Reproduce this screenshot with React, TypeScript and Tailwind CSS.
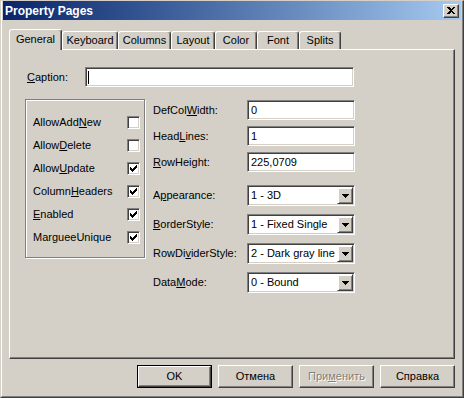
import React from 'react';

const raised =
  'border border-t-white border-l-white border-r-[#404040] border-b-[#404040] shadow-[inset_-1px_-1px_0_#808080]';
const sunken =
  'border border-t-[#808080] border-l-[#808080] border-r-white border-b-white shadow-[inset_1px_1px_0_#404040,inset_-1px_-1px_0_#D4D0C8]';

const tabs = [
  { name: 'General', w: 'w-[53px]' },
  { name: 'Keyboard', w: 'w-[56px]' },
  { name: 'Columns', w: 'w-[53px]' },
  { name: 'Layout', w: 'w-[44px]' },
  { name: 'Color', w: 'w-[42px]' },
  { name: 'Font', w: 'w-[42px]' },
  { name: 'Splits', w: 'w-[42px]' },
];

const CheckMark = () => (
  <svg width="7" height="7" viewBox="0 0 7 7" shapeRendering="crispEdges">
    <rect x="0" y="2" width="1" height="3" fill="#000" />
    <rect x="1" y="3" width="1" height="3" fill="#000" />
    <rect x="2" y="4" width="1" height="3" fill="#000" />
    <rect x="3" y="3" width="1" height="3" fill="#000" />
    <rect x="4" y="2" width="1" height="3" fill="#000" />
    <rect x="5" y="1" width="1" height="3" fill="#000" />
    <rect x="6" y="0" width="1" height="3" fill="#000" />
  </svg>
);

const CheckRow = ({ label, checked }: { label: React.ReactNode; checked: boolean }) => (
  <div className="flex h-[23px] items-center justify-between">
    <span>{label}</span>
    <div className={`flex h-[13px] w-[13px] items-center justify-center bg-white ${sunken}`}>
      {checked && <CheckMark />}
    </div>
  </div>
);

const TextRow = ({ label, value }: { label: React.ReactNode; value: string }) => (
  <div className="flex items-center">
    <span className="w-[94px]">{label}</span>
    <div className={`flex h-[20px] w-[108px] items-center bg-white pl-[3px] ${sunken}`}>{value}</div>
  </div>
);

const SelectRow = ({ label, value }: { label: React.ReactNode; value: string }) => (
  <div className="flex items-center">
    <span className="w-[94px]">{label}</span>
    <div className={`flex h-[21px] w-[108px] items-center justify-between bg-white pl-[3px] pr-[1px] ${sunken}`}>
      <span className="whitespace-nowrap">{value}</span>
      <div className={`flex h-[17px] w-[16px] shrink-0 items-center justify-center bg-[#D4D0C8] ${raised} border-t-[#D4D0C8] border-l-[#D4D0C8] shadow-[inset_1px_1px_0_#fff,inset_-1px_-1px_0_#808080]`}>
        <svg width="7" height="4" viewBox="0 0 7 4" shapeRendering="crispEdges">
          <path d="M0 0H7V1H6V2H5V3H4V4H3V3H2V2H1V1H0Z" fill="#000" />
        </svg>
      </div>
    </div>
  </div>
);

const Button = ({ children, def, disabled }: { children: React.ReactNode; def?: boolean; disabled?: boolean }) => (
  <div className={`h-[23px] w-[75px] ${def ? 'border border-black' : ''}`}>
    <div
      className={`flex h-full w-full items-center justify-center ${raised} ${
        disabled ? 'text-[#808080] [text-shadow:1px_1px_0_#fff]' : ''
      }`}
    >
      {children}
    </div>
  </div>
);

export default function App() {
  return (
    <div className="h-[398px] w-[464px] border-b border-l border-r border-t border-b-[#404040] border-l-[#D4D0C8] border-r-[#404040] border-t-[#D4D0C8] bg-[#D4D0C8] font-['Liberation_Sans',Arial,sans-serif] text-[11px] text-black">
      <div className="h-full border-b border-l border-r border-b-[#808080] border-l-white border-r-[#808080] px-[1px]">
        {/* title bar */}
        <div className="flex h-[19px] items-center justify-between bg-gradient-to-r from-[#0A246A] to-[#A6CAF0] pl-[2px] pr-[2px]">
          <span className="text-[12px] font-bold text-white">Property Pages</span>
          <div className={`flex h-[14px] w-[16px] items-center justify-center bg-[#D4D0C8] ${raised}`}>
            <svg width="8" height="7" viewBox="0 0 8 7" shapeRendering="crispEdges">
              <path d="M0 0H2L4 2L6 0H8L5 3.5L8 7H6L4 5L2 7H0L3 3.5Z" fill="#000" />
            </svg>
          </div>
        </div>

        {/* tabs */}
        <div className="relative z-10 mb-[-1px] ml-[6px] mt-[9px] flex h-[21px] items-end">
          {tabs.map((t, i) =>
            i === 0 ? (
              <div
                key={t.name}
                className={`${t.w} flex h-[21px] items-center justify-center rounded-t-[3px] border-l border-r border-t border-l-white border-r-[#404040] border-t-white bg-[#D4D0C8] pb-[2px] shadow-[inset_-1px_0_0_#808080]`}
              >
                {t.name}
              </div>
            ) : (
              <div
                key={t.name}
                className={`${t.w} mb-[1px] flex h-[18px] items-center justify-center rounded-t-[3px] border-l border-r border-t border-l-white border-r-[#404040] border-t-white shadow-[inset_-1px_0_0_#808080]`}
              >
                {t.name}
              </div>
            )
          )}
        </div>

        {/* panel */}
        <div className="ml-[6px] h-[310px] w-[446px] border-b border-l border-r border-t border-b-[#404040] border-l-white border-r-[#404040] border-t-white pl-[15px] pt-[17px] shadow-[inset_-1px_-1px_0_#808080]">
          <div className="flex h-[20px] items-center">
            <span className="ml-[2px] w-[58px]">
              <u>C</u>aption:
            </span>
            <div className={`flex h-[20px] w-[269px] items-center bg-white pl-[2px] ${sunken}`}>
              <div className="h-[13px] w-[1px] bg-black" />
            </div>
          </div>

          <div className="mt-[12px] flex">
            <div className="h-[159px] w-[120px] border border-[#808080] pl-[7px] pr-[4px] pt-[11px] shadow-[inset_1px_1px_0_#fff,1px_1px_0_#fff]">
              <CheckRow label={<>AllowAdd<u>N</u>ew</>} checked={false} />
              <CheckRow label={<>Allow<u>D</u>elete</>} checked={false} />
              <CheckRow label={<>Allow<u>U</u>pdate</>} checked />
              <CheckRow label={<>Column<u>H</u>eaders</>} checked />
              <CheckRow label={<><u>E</u>nabled</>} checked />
              <CheckRow label="MargueeUnique" checked />
            </div>

            <div className="ml-[8px] mt-[1px] flex flex-col">
              <div className="flex flex-col gap-[6px]">
                <TextRow label={<>DefCol<u>W</u>idth:</>} value="0" />
                <TextRow label={<>Head<u>L</u>ines:</>} value="1" />
                <TextRow label={<><u>R</u>owHeight:</>} value="225,0709" />
              </div>
              <div className="mt-[13px] flex flex-col gap-[8px]">
                <SelectRow label={<>A<u>p</u>pearance:</>} value="1 - 3D" />
                <SelectRow label={<><u>B</u>orderStyle:</>} value="1 - Fixed Single" />
                <SelectRow label={<>RowDi<u>v</u>iderStyle:</>} value="2 - Dark gray line" />
                <SelectRow label={<>Data<u>M</u>ode:</>} value="0 - Bound" />
              </div>
            </div>
          </div>
        </div>

        {/* buttons */}
        <div className="ml-[6px] mt-[6px] flex w-[446px] justify-end gap-[6px]">
          <Button def>OK</Button>
          <Button>Отмена</Button>
          <Button disabled>
            <span>
              При<u>м</u>енить
            </span>
          </Button>
          <Button>Справка</Button>
        </div>
      </div>
    </div>
  );
}
